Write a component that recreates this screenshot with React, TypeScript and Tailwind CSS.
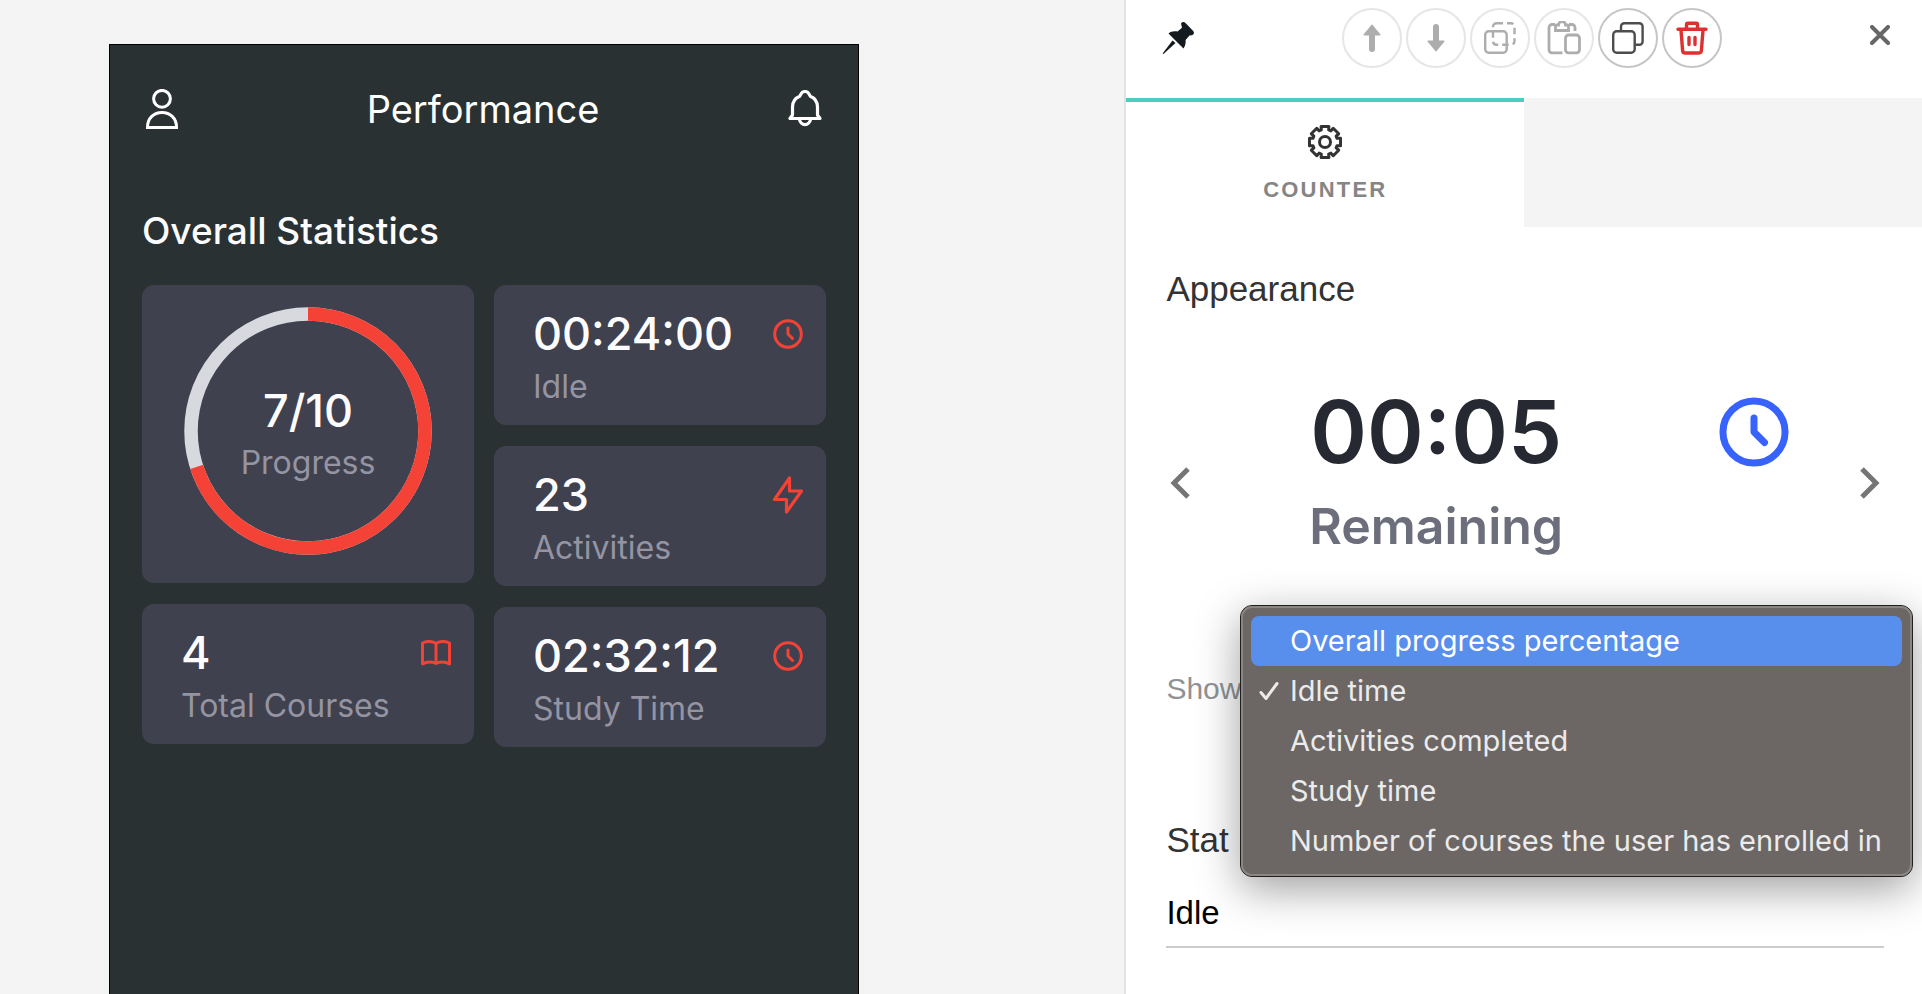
import React, { useState } from "react";

type IconProps = { className?: string };

const UserIcon = ({ className }: IconProps) => (
  <svg viewBox="0 0 32 40" fill="none" stroke="currentColor" strokeWidth="3" className={className}>
    <circle cx="16" cy="9.8" r="8.4" />
    <path d="M1.5 38.5C1.5 29 8 23.500 16 23.500s14.500 5.500 14.500 15z" />
  </svg>
);

const BellIcon = ({ className }: IconProps) => (
  <svg viewBox="0 0 34 38" fill="none" stroke="currentColor" strokeWidth="3.200" strokeLinejoin="round" strokeLinecap="round" className={className}>
    <path d="M2 28.500h30l-2.500-3.500V17c0-5-2.800-9-7.200-10.800l-1.600-2.700c-.6-1.200-2-2-3.700-2s-3.100.8-3.700 2l-1.600 2.700C7.300 8 4.500 12 4.500 17v8z" />
    <path d="M11.500 29.500a5.600 6.300 0 0 0 11 0" />
  </svg>
);

const ClockIcon = ({ className }: IconProps) => (
  <svg viewBox="0 0 30 30" fill="none" stroke="currentColor" strokeWidth="3" strokeLinecap="round" strokeLinejoin="round" className={className}>
    <circle cx="15" cy="15" r="13.300" />
    <path d="M15 9v6l4.500 4.500" />
  </svg>
);

const BoltIcon = ({ className }: IconProps) => (
  <svg viewBox="0 0 30 38" fill="none" stroke="currentColor" strokeWidth="3.200" strokeLinejoin="round" className={className}>
    <path d="M16.500 2v13H28.500L13.500 36V23.500H1.500z" />
  </svg>
);

const BookIcon = ({ className }: IconProps) => (
  <svg viewBox="0 0 30 26" fill="none" stroke="currentColor" strokeWidth="3" strokeLinejoin="round" className={className}>
    <path d="M15 3.500v20C12 21.800 6 21.200 1.500 24V3C6 .8 12 1 15 3.500zM15 3.500C18 1 24 .8 28.500 3v21C24 21.200 18 21.800 15 23.500" />
  </svg>
);

const PinIcon = ({ className }: IconProps) => (
  <svg viewBox="0 0 32 32" fill="currentColor" className={className}>
    <path d="M19 1.500c1-1.500 3-2 4.500-.6l7.700 8c1.400 1.500.8 3.800-1.200 4.300l-2.500.3-3.900 4.500c.2 3-.3 6-2.100 8.500L6.500 11.500c2-2 5.500-2.700 9-2l4.500-3.800z" />
    <path d="M10.500 18.500l3 2.500L1.500 32l-.9-.5z" />
  </svg>
);

const ArrowIcon = ({ className }: IconProps) => (
  <svg viewBox="0 0 34 34" fill="currentColor" className={className}>
    <path d="M17 3.300l8.300 10c.4.600.1 1.200-.6 1.200H20v13.500a3 3 0 0 1-6 0V14.500H9.300c-.7 0-1-.6-.6-1.200z" />
  </svg>
);

const GroupIcon = ({ className }: IconProps) => (
  <svg viewBox="0 0 34 34" fill="none" stroke="currentColor" strokeWidth="2.400" className={className}>
    <rect x="2.200" y="10.200" width="21.500" height="21.500" rx="3.500" />
    <rect x="10" y="2.200" width="21.500" height="21.500" rx="3.500" strokeDasharray="6.500 4" />
  </svg>
);

const CopyIcon = ({ className }: IconProps) => (
  <svg viewBox="0 0 34 34" fill="none" stroke="currentColor" strokeWidth="2.400" className={className}>
    <rect x="2.200" y="10.200" width="21.500" height="21.500" rx="3.500" />
    <path d="M10 9V5.500a3.300 3.300 0 0 1 3.300-3.300h15a3.300 3.300 0 0 1 3.300 3.300v15a3.300 3.300 0 0 1-3.300 3.300H24.500" />
  </svg>
);

const PasteIcon = ({ className }: IconProps) => (
  <svg viewBox="0 0 34 34" fill="none" stroke="currentColor" strokeWidth="2.800" className={className}>
    <path d="M15.500 31.800H5a3 3 0 0 1-3-3V6.500a3 3 0 0 1 3-3h3M22 3.500h3a3 3 0 0 1 3 3V10" />
    <path d="M8.500 9.500V5.500a1.500 1.500 0 0 1 1.500-1.500h1.500a3.500 3.500 0 0 1 7 0H20a1.500 1.500 0 0 1 1.500 1.500v4z" />
    <rect x="18.500" y="14" width="14" height="17.800" rx="3" />
  </svg>
);

const TrashIcon = ({ className }: IconProps) => (
  <svg viewBox="0 0 34 34" fill="none" stroke="currentColor" strokeWidth="3.400" strokeLinecap="round" className={className}>
    <path d="M3 8.200h28M11.500 7V3.500c0-.8.400-1.200 1.200-1.200h8.600c.8 0 1.200.4 1.200 1.200V7" />
    <path d="M6 9l1.600 20.500c.1 1.600 1 2.500 2.600 2.500h13.600c1.600 0 2.500-.9 2.600-2.500L28 9M14 16.500v7M20 16.500v7" />
  </svg>
);

// eight teeth, each one going from the root circle out to the tip and back
const gearPoints = Array.from({ length: 8 }, (_, i) =>
  [
    [-17, 12.6],
    [-14, 16],
    [14, 16],
    [17, 12.6],
  ].map(([offset, radius]) => {
    const angle = ((i * 45 + offset) * Math.PI) / 180;
    return `${(18 + radius * Math.sin(angle)).toFixed(2)},${(18 - radius * Math.cos(angle)).toFixed(2)}`;
  })
)
  .flat()
  .join(" ");

const GearIcon = ({ className }: IconProps) => (
  <svg viewBox="0 0 36 36" fill="none" stroke="currentColor" strokeWidth="3" strokeLinejoin="round" className={className}>
    <polygon points={gearPoints} />
    <circle cx="18" cy="18" r="5.500" />
  </svg>
);

const CloseIcon = ({ className }: IconProps) => (
  <svg viewBox="0 0 20 20" fill="none" stroke="currentColor" strokeWidth="4" strokeLinecap="round" className={className}>
    <path d="M2 2l16 16M18 2L2 18" />
  </svg>
);

const ChevronIcon = ({ className }: IconProps) => (
  <svg viewBox="0 0 20 32" fill="none" stroke="currentColor" strokeWidth="5" className={className}>
    <path d="M18 2L4 16 18 30" />
  </svg>
);

const CheckIcon = ({ className }: IconProps) => (
  <svg viewBox="0 0 20 20" fill="none" stroke="currentColor" strokeWidth="3" strokeLinecap="round" strokeLinejoin="round" className={className}>
    <path d="M2 11.500l5 6L18 2.500" />
  </svg>
);

const options = [
  "Overall progress percentage",
  "Idle time",
  "Activities completed",
  "Study time",
  "Number of courses the user has enrolled in",
];

type StatCardProps = { value: string; label: string; icon: React.ReactNode };

const StatCard = ({ value, label, icon }: StatCardProps) => (
  <div className="rounded-xl bg-[#40414e] pt-[21px] pr-[23px] pb-[18px] pl-[39px]">
    <div className="flex items-center justify-between">
      <span className="text-[45px] leading-[56px] font-medium text-[#fcfcff]">{value}</span>
      <span className="text-[#f44336]">{icon}</span>
    </div>
    <p className="mt-[5px] text-[32px] leading-10 text-[#9494a2]">{label}</p>
  </div>
);

const ProgressCard = () => {
  const done = 7;
  const total = 10;
  const length = 2 * Math.PI * 117;

  return (
    <div className="rounded-xl bg-[#40414e] pt-[22px] pb-7">
      <div className="relative mx-auto size-[248px]">
        <svg viewBox="0 0 248 248" fill="none" strokeWidth="13.500" className="size-full -rotate-90">
          <circle cx="124" cy="124" r="117" stroke="#d8d9df" />
          <circle
            cx="124"
            cy="124"
            r="117"
            stroke="#f44336"
            strokeDasharray={`${(length * done) / total} ${length}`}
          />
        </svg>
        <div className="absolute inset-0 flex flex-col items-center justify-center gap-1 pt-1">
          <span className="text-[45px] leading-[56px] font-medium text-[#fcfcff]">
            {done}/{total}
          </span>
          <span className="text-[32px] leading-10 text-[#9494a2]">Progress</span>
        </div>
      </div>
    </div>
  );
};

const PhonePreview = () => (
  <div className="w-[750px] max-w-full border border-b-0 border-black bg-[#293132] px-8 pt-[34px] font-['Inter',sans-serif]">
    <header className="flex h-15 items-center justify-between px-1 text-white">
      <button type="button" aria-label="Profile">
        <UserIcon className="h-10 w-8" />
      </button>
      <h1 className="text-[38px] leading-[48px]">Performance</h1>
      <button type="button" aria-label="Notifications">
        <BellIcon className="h-[38px] w-[34px]" />
      </button>
    </header>
    <h2 className="mt-[68px] text-[37px] leading-[48px] font-medium text-[#fcfcff]">Overall Statistics</h2>
    <div className="mt-[30px] grid grid-cols-2 gap-5">
      <div className="flex flex-col gap-[21px]">
        <ProgressCard />
        <StatCard value="4" label="Total Courses" icon={<BookIcon className="h-[26px] w-[30px]" />} />
      </div>
      <div className="flex flex-col gap-[21px]">
        <StatCard value="00:24:00" label="Idle" icon={<ClockIcon className="size-[30px]" />} />
        <StatCard value="23" label="Activities" icon={<BoltIcon className="h-[38px] w-[30px]" />} />
        <StatCard value="02:32:12" label="Study Time" icon={<ClockIcon className="size-[30px]" />} />
      </div>
    </div>
  </div>
);

const toolbar = [
  { name: "Move up", icon: <ArrowIcon className="size-[34px]" />, style: "border-[#e6e6e6] text-[#adadad]", disabled: true },
  { name: "Move down", icon: <ArrowIcon className="size-[34px] rotate-180" />, style: "border-[#e6e6e6] text-[#adadad]", disabled: true },
  { name: "Copy style", icon: <GroupIcon className="size-[34px]" />, style: "border-[#e6e6e6] text-[#adadad]", disabled: true },
  { name: "Paste", icon: <PasteIcon className="size-[34px]" />, style: "border-[#e6e6e6] text-[#adadad]", disabled: true },
  { name: "Duplicate", icon: <CopyIcon className="size-[34px]" />, style: "border-[#c6c6c6] text-[#4d4d4d]", disabled: false },
  { name: "Delete", icon: <TrashIcon className="size-[34px]" />, style: "border-[#c6c6c6] text-[#dc3131]", disabled: false },
];

const SettingsPanel = () => {
  const [selected, setSelected] = useState("Idle time");
  const [active, setActive] = useState("Overall progress percentage");
  const [stat, setStat] = useState("Idle");

  return (
    <aside className="w-[41.5%] min-w-[760px] shrink-0 border-l-2 border-[#e2e2e2] bg-white font-['Liberation_Sans',Arial,sans-serif]">
      <div className="flex items-start justify-between pt-2 pr-8 pb-[30px] pl-9">
        <button type="button" aria-label="Pin panel" className="mt-[14px] text-[#131a20]">
          <PinIcon className="size-8" />
        </button>
        <div className="flex gap-1">
          {toolbar.map((item) => (
            <button
              key={item.name}
              type="button"
              aria-label={item.name}
              disabled={item.disabled}
              className={`flex size-15 items-center justify-center rounded-full border-2 ${item.style}`}
            >
              {item.icon}
            </button>
          ))}
        </div>
        <button type="button" aria-label="Close" className="mt-[17px] text-[#666666]">
          <CloseIcon className="size-5" />
        </button>
      </div>

      <div className="grid grid-cols-2 bg-[#f4f4f4]">
        <button type="button" className="flex h-[129px] flex-col items-center border-t-4 border-[#4bcdc0] bg-white pt-[22px]">
          <GearIcon className="size-9 text-[#333333]" />
          <span className="mt-[14px] text-[22px] leading-8 font-bold tracking-widest text-[#858585]">COUNTER</span>
        </button>
      </div>

      <div className="pt-[38px] pr-[38px] pl-10">
        <h3 className="text-[35px] leading-[48px] text-[#333333]">Appearance</h3>

        <div className="mt-[45px] flex h-[250px] items-center justify-between px-1 text-[#757575]">
          <button type="button" aria-label="Previous style">
            <ChevronIcon className="h-8 w-5" />
          </button>
          <div className="ml-12 flex w-[480px] items-start justify-between pb-[26px] font-['Inter',sans-serif] font-semibold">
            <div className="text-center">
              <p className="text-[86px] leading-[96px] text-[#262931]">00:05</p>
              <p className="mt-4 text-[50px] leading-[60px] text-[#6c6e7c]">Remaining</p>
            </div>
            <ClockIcon className="mt-[13px] size-[70px] text-[#3762fb]" />
          </div>
          <button type="button" aria-label="Next style">
            <ChevronIcon className="h-8 w-5 rotate-180" />
          </button>
        </div>

        <div className="relative mt-[50px] flex h-15 items-center">
          <label htmlFor="show" className="w-20 text-[30px] text-[#8f9396]">
            Show
          </label>
          <select
            id="show"
            value={selected}
            onChange={(e) => setSelected(e.target.value)}
            className="h-12 flex-1 appearance-none text-[30px] text-black"
          >
            {options.map((option) => (
              <option key={option}>{option}</option>
            ))}
          </select>
          <div
            role="listbox"
            aria-label="Show"
            className="absolute top-[-53px] right-[-29px] rounded-xl border border-[#1f1f1f] bg-[#6c6664] font-['Inter',sans-serif] shadow-[0_12px_44px_rgba(0,0,0,0.38)]"
          >
            <div className="rounded-[11px] border-2 border-[#8b8683] p-2">
              {options.map((option) => (
                <button
                  key={option}
                  type="button"
                  role="option"
                  aria-selected={option === selected}
                  onMouseEnter={() => setActive(option)}
                  onClick={() => setSelected(option)}
                  className={`flex h-[50px] w-full items-center rounded-lg pr-5 pl-2 text-[29px] whitespace-nowrap ${
                    option === active ? "bg-[#588eec] text-white" : "text-[#ebebeb]"
                  }`}
                >
                  <span className="w-[31px] shrink-0">
                    {option === selected && <CheckIcon className="size-5" />}
                  </span>
                  {option}
                </button>
              ))}
            </div>
          </div>
        </div>

        <label htmlFor="stat" className="mt-[98px] block text-[35px] leading-[48px] text-[#333333]">
          Stat
        </label>
        <input
          id="stat"
          value={stat}
          onChange={(e) => setStat(e.target.value)}
          className="mt-4 h-[68px] w-full border-b-2 border-[#cccccc] text-[33px] text-black outline-none"
        />
      </div>
    </aside>
  );
};

const App = () => {
  return (
    <div className="flex min-h-screen bg-[#f4f4f4]">
      <main className="flex min-w-0 flex-1 pt-11 pl-[109px]">
        <PhonePreview />
      </main>
      <SettingsPanel />
    </div>
  );
};

export default App;
